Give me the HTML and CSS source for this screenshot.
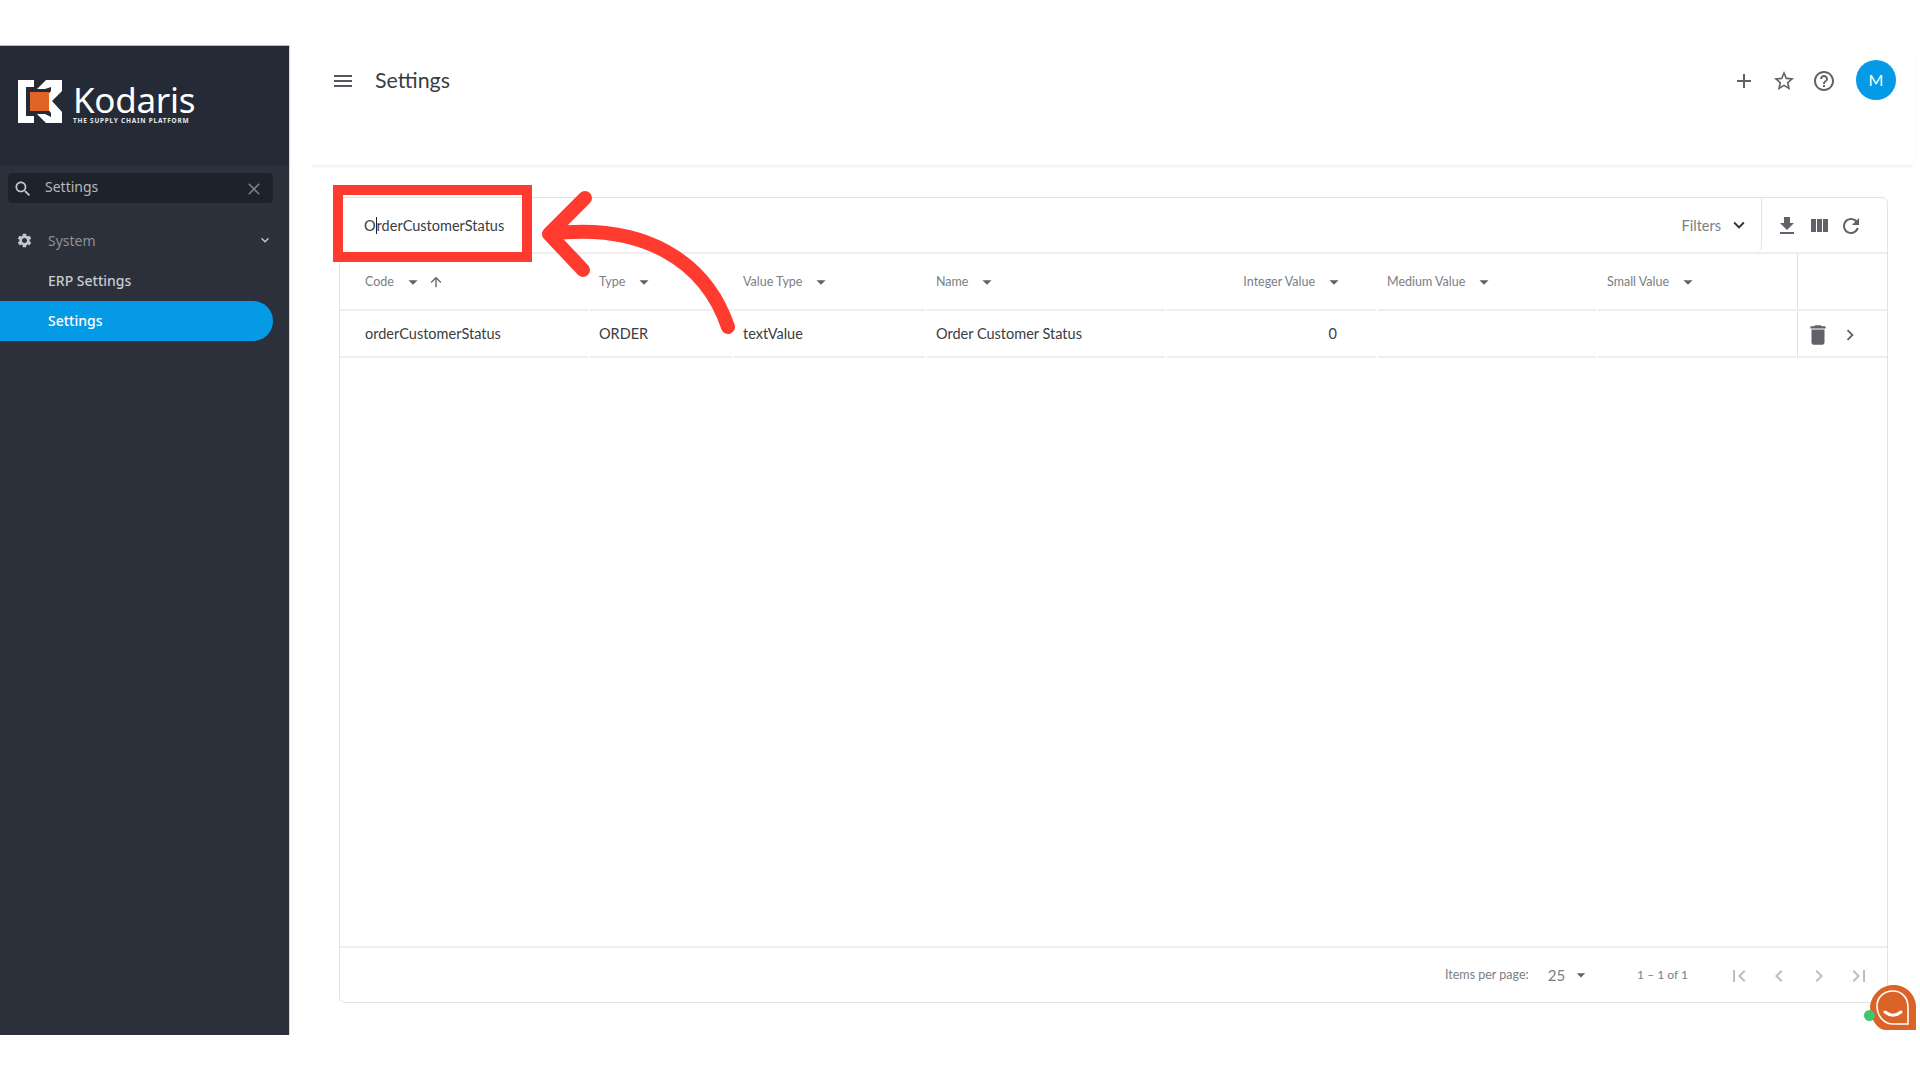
FILE: index.html
```html
<!DOCTYPE html>
<html>
<head>
    <title>Settings</title>
    <meta name="viewport" content="width=device-width, initial-scale=1">
    <link rel="stylesheet" href="styles.css">
</head>
<body>
    <svg class="icon-defs" width="0" height="0">
        <symbol id="i-menu" viewBox="0 0 24 24"><path d="M3 18h18v-2H3v2zm0-5h18v-2H3v2zm0-7v2h18V6H3z"/></symbol>
        <symbol id="i-add" viewBox="0 0 24 24"><path d="M19 13h-6v6h-2v-6H5v-2h6V5h2v6h6v2z"/></symbol>
        <symbol id="i-star" viewBox="0 0 24 24"><path d="M22 9.24l-7.19-.62L12 2 9.19 8.63 2 9.24l5.46 4.73L5.82 21 12 17.27 18.18 21l-1.63-7.03L22 9.24zM12 15.4l-3.76 2.27 1-4.28-3.32-2.88 4.38-.38L12 6.1l1.71 4.04 4.38.38-3.32 2.88 1 4.28L12 15.4z"/></symbol>
        <symbol id="i-help" viewBox="0 0 24 24"><path d="M11 18h2v-2h-2v2zm1-16C6.48 2 2 6.48 2 12s4.48 10 10 10 10-4.48 10-10S17.52 2 12 2zm0 18c-4.41 0-8-3.59-8-8s3.59-8 8-8 8 3.59 8 8-3.59 8-8 8zm0-14c-2.21 0-4 1.79-4 4h2c0-1.1.9-2 2-2s2 .9 2 2c0 2-3 1.75-3 5h2c0-2.25 3-2.5 3-5 0-2.21-1.79-4-4-4z"/></symbol>
        <symbol id="i-search" viewBox="0 0 24 24"><path d="M15.5 14h-.79l-.28-.27C15.41 12.59 16 11.11 16 9.5 16 5.91 13.09 3 9.5 3S3 5.91 3 9.5 5.91 16 9.5 16c1.61 0 3.09-.59 4.23-1.57l.27.28v.79l5 4.99L20.49 19l-4.99-5zm-6 0C7.01 14 5 11.99 5 9.5S7.01 5 9.5 5 14 7.01 14 9.5 11.99 14 9.5 14z"/></symbol>
        <symbol id="i-close" viewBox="0 0 24 24"><path d="M19 6.41L17.59 5 12 10.59 6.41 5 5 6.41 10.59 12 5 17.59 6.41 19 12 13.41 17.59 19 19 17.59 13.41 12z"/></symbol>
        <symbol id="i-gear" viewBox="0 0 24 24"><path d="M19.14 12.94c.04-.3.06-.61.06-.94 0-.32-.02-.64-.07-.94l2.03-1.58c.18-.14.23-.41.12-.61l-1.92-3.32c-.12-.22-.37-.29-.59-.22l-2.39.96c-.5-.38-1.03-.7-1.62-.94l-.36-2.54c-.04-.24-.24-.41-.48-.41h-3.84c-.24 0-.43.17-.47.41l-.36 2.54c-.59.24-1.13.57-1.62.94l-2.39-.96c-.22-.08-.47 0-.59.22L2.74 8.87c-.12.21-.08.47.12.61l2.03 1.58c-.05.3-.09.63-.09.94s.02.64.07.94l-2.03 1.58c-.18.14-.23.41-.12.61l1.92 3.32c.12.22.37.29.59.22l2.39-.96c.5.38 1.03.7 1.62.94l.36 2.54c.05.24.24.41.48.41h3.84c.24 0 .44-.17.47-.41l.36-2.54c.59-.24 1.13-.56 1.62-.94l2.39.96c.22.08.47 0 .59-.22l1.92-3.32c.12-.22.07-.47-.12-.61l-2.01-1.58zM12 15.6c-1.98 0-3.6-1.62-3.6-3.6s1.62-3.6 3.6-3.6 3.6 1.62 3.6 3.6-1.62 3.6-3.6 3.6z"/></symbol>
        <symbol id="i-more" viewBox="0 0 24 24"><path d="M16.59 8.59L12 13.17 7.41 8.59 6 10l6 6 6-6z"/></symbol>
        <symbol id="i-right" viewBox="0 0 24 24"><path d="M10 6L8.59 7.41 13.17 12l-4.58 4.59L10 18l6-6z"/></symbol>
        <symbol id="i-left" viewBox="0 0 24 24"><path d="M15.41 7.41L14 6l-6 6 6 6 1.41-1.41L10.83 12z"/></symbol>
        <symbol id="i-first" viewBox="0 0 24 24"><path d="M18.41 16.59L13.82 12l4.59-4.59L17 6l-6 6 6 6zM6 6h2v12H6z"/></symbol>
        <symbol id="i-last" viewBox="0 0 24 24"><path d="M5.59 7.41L10.18 12l-4.59 4.59L7 18l6-6-6-6zM16 6h2v12h-2z"/></symbol>
        <symbol id="i-download" viewBox="0 0 24 24"><path d="M19 9h-4V3H9v6H5l7 7 7-7zM5 18v2h14v-2H5z"/></symbol>
        <symbol id="i-columns" viewBox="0 0 24 24"><path d="M10 18h5V5h-5v13zm-6 0h5V5H4v13zM16 5v13h5V5h-5z"/></symbol>
        <symbol id="i-refresh" viewBox="0 0 24 24"><path d="M17.65 6.35C16.2 4.9 14.21 4 12 4c-4.42 0-7.99 3.58-7.99 8s3.57 8 7.99 8c3.73 0 6.84-2.55 7.73-6h-2.08c-.82 2.33-3.04 4-5.65 4-3.31 0-6-2.69-6-6s2.69-6 6-6c1.66 0 3.14.69 4.22 1.78L13 11h7V4l-2.35 2.35z"/></symbol>
        <symbol id="i-delete" viewBox="0 0 24 24"><path d="M6 19c0 1.1.9 2 2 2h8c1.1 0 2-.9 2-2V7H6v12zM19 4h-3.5l-1-1h-5l-1 1H5v2h14V4z"/></symbol>
        <symbol id="i-up" viewBox="0 0 24 24"><path d="M4 12l1.41 1.41L11 7.83V20h2V7.83l5.58 5.59L20 12l-8-8-8 8z"/></symbol>
        <symbol id="i-drop" viewBox="0 0 24 24"><path d="M7 10l5 5 5-5z"/></symbol>
    </svg>

    <div class="app">
        <aside class="sidebar">
            <div class="brand">
                <svg class="brand-mark" viewBox="0 0 44 43">
                    <path fill="#fff" d="M0 0h16v7H8v29h8v7H0z"/>
                    <path fill="#fff" d="M28 0h16v11l-10 10 10 11v11H28l-9-9h8l6 3v-4l-9-11 9-11V7l-6 2-8 0z"/>
                    <rect x="12" y="12" width="19" height="19" fill="#df6426"/>
                </svg>
                <div class="brand-text">
                    <div class="brand-name">Kodaris</div>
                    <div class="brand-tag">THE SUPPLY CHAIN PLATFORM</div>
                </div>
            </div>
            <div class="side-search">
                <svg class="side-search-icon"><use href="#i-search"/></svg>
                <span class="side-search-text">Settings</span>
                <svg class="side-search-close"><use href="#i-close"/></svg>
            </div>
            <div class="nav-group">
                <svg class="nav-gear"><use href="#i-gear"/></svg>
                <span class="nav-group-label">System</span>
                <svg class="nav-chevron"><use href="#i-more"/></svg>
            </div>
            <div class="nav-item">ERP Settings</div>
            <div class="nav-item active">Settings</div>
        </aside>

        <main class="main">
            <header class="topbar">
                <svg class="topbar-menu"><use href="#i-menu"/></svg>
                <h1 class="topbar-title">Settings</h1>
                <div class="topbar-actions">
                    <svg class="topbar-icon"><use href="#i-add"/></svg>
                    <svg class="topbar-icon"><use href="#i-star"/></svg>
                    <svg class="topbar-icon"><use href="#i-help"/></svg>
                    <div class="avatar">M</div>
                </div>
            </header>

            <section class="card">
                <div class="toolbar">
                    <div class="search-area">
                        <div class="search-value">O<span class="caret"></span>rderCustomerStatus</div>
                        <div class="filters">Filters <svg class="filters-icon"><use href="#i-more"/></svg></div>
                    </div>
                    <div class="tools">
                        <svg class="tool"><use href="#i-download"/></svg>
                        <svg class="tool"><use href="#i-columns"/></svg>
                        <svg class="tool"><use href="#i-refresh"/></svg>
                    </div>
                </div>

                <div class="row head">
                    <div class="cell first">Code <svg class="drop"><use href="#i-drop"/></svg><svg class="sort-up"><use href="#i-up"/></svg></div>
                    <div class="cell">Type <svg class="drop"><use href="#i-drop"/></svg></div>
                    <div class="cell">Value Type <svg class="drop"><use href="#i-drop"/></svg></div>
                    <div class="cell">Name <svg class="drop"><use href="#i-drop"/></svg></div>
                    <div class="cell num">Integer Value <svg class="drop"><use href="#i-drop"/></svg></div>
                    <div class="cell">Medium Value <svg class="drop"><use href="#i-drop"/></svg></div>
                    <div class="cell">Small Value <svg class="drop"><use href="#i-drop"/></svg></div>
                    <div class="cell actions"></div>
                </div>
                <div class="row body">
                    <div class="cell first">orderCustomerStatus</div>
                    <div class="cell">ORDER</div>
                    <div class="cell">textValue</div>
                    <div class="cell">Order Customer Status</div>
                    <div class="cell num">0</div>
                    <div class="cell"></div>
                    <div class="cell"></div>
                    <div class="cell actions">
                        <svg class="row-delete"><use href="#i-delete"/></svg>
                        <svg class="row-open"><use href="#i-right"/></svg>
                    </div>
                </div>
                <div class="table-space"></div>

                <footer class="pager">
                    <span class="pager-label">Items per page:</span>
                    <span class="pager-size">25</span>
                    <svg class="pager-drop"><use href="#i-drop"/></svg>
                    <span class="pager-range">1 – 1 of 1</span>
                    <svg class="pager-btn"><use href="#i-first"/></svg>
                    <svg class="pager-btn"><use href="#i-left"/></svg>
                    <svg class="pager-btn"><use href="#i-right"/></svg>
                    <svg class="pager-btn"><use href="#i-last"/></svg>
                </footer>
            </section>
        </main>
    </div>

    <!-- annotation drawn over the page -->
    <div class="callout-box"></div>
    <svg class="callout-arrow" viewBox="0 0 1920 1080">
        <path d="M728 327C706 262 645 222 549 234M585 198L549 234L583 270"/>
    </svg>

    <!-- chat widget -->
    <svg class="chat" viewBox="0 0 46 46">
        <path fill="#dc6327" d="M0 21C2 8 12 0 24 0C36 0 46 10 46 22V45H16C6 45 0 32 0 21z"/>
        <path fill="none" stroke="#fff" stroke-width="1.6" d="M7 21C7 12 14 6 23 6C32 6 38 13 38 22V39H23C14 39 7 31 7 21z"/>
        <path fill="none" stroke="#fff" stroke-width="3" stroke-linecap="round" d="M15 27C20 31 26 31 31 27"/>
    </svg>
    <div class="chat-dot"></div>
</body>
</html>
```

FILE: styles.css
```css
* {
    box-sizing: border-box;
}
html, body {
    margin: 0;
    padding: 0;
    height: 1080px;
    overflow: hidden;
    background-color: #fff;
}
body {
    font-family: Lato, "Liberation Sans", sans-serif;
    color: #3a3d42;
    position: relative;
}
.icon-defs {
    position: absolute;
}
svg {
    fill: currentColor;
    flex: none;
}
.app {
    display: flex;
    height: 990px;
    margin-top: 45px;
    margin-right: 5px;
}

/* sidebar */
.sidebar {
    width: 290px;
    flex: none;
    background-color: #2b303b;
    border-right: 1px solid #d8d8d8;
    border-top: 1px solid #bbb;
    font-family: "Noto Sans", sans-serif;
}
.brand {
    height: 119px;
    background-color: #252b36;
    display: flex;
    align-items: flex-start;
    padding: 34px 0 0 18px;
}
.brand-mark {
    width: 44px;
    height: 43px;
}
.brand-text {
    margin-left: 11px;
    color: #fff;
}
.brand-name {
    font-size: 35px;
    line-height: 32px;
    margin-top: 4px;
    letter-spacing: -0.3px;
}
.brand-tag {
    font-size: 6.5px;
    line-height: 7px;
    margin-top: 1px;
    font-weight: 700;
    letter-spacing: 0.75px;
    color: #e8e8e8;
}
.side-search {
    margin: 8px 16px 0 8px;
    height: 30px;
    background-color: #1e222a;
    border-radius: 4px;
    display: flex;
    align-items: center;
    color: #b5b8bd;
    font-size: 14px;
}
.side-search-icon {
    width: 20px;
    height: 20px;
    margin-left: 5px;
    margin-top: 2px;
    color: #c4c7cb;
}
.side-search-text {
    margin-left: 12px;
    margin-top: -3px;
    flex: 1;
}
.side-search-close {
    width: 20px;
    height: 20px;
    margin-right: 9px;
    margin-top: 2px;
    color: #777b82;
}
.nav-group {
    margin-top: 22px;
    height: 30px;
    display: flex;
    align-items: center;
    color: #8d9096;
    font-size: 14px;
}
.nav-gear {
    width: 17px;
    height: 17px;
    margin-left: 16px;
    color: #c4c7cb;
}
.nav-group-label {
    margin-left: 15px;
    flex: 1;
}
.nav-chevron {
    width: 16px;
    height: 16px;
    margin-right: 16px;
    color: #c4c7cb;
}
.nav-item {
    height: 40px;
    margin-right: 16px;
    padding-left: 48px;
    line-height: 40px;
    font-size: 14px;
    font-weight: 500;
    color: #c9cbce;
    border-radius: 0 20px 20px 0;
}
.nav-group + .nav-item {
    margin-top: 6px;
}
.nav-item.active {
    background-color: #059ae6;
    color: #fff;
}

/* top bar */
.main {
    flex: 1;
    display: flex;
    flex-direction: column;
    min-width: 0;
}
.topbar {
    height: 120px;
    margin-left: 20px;
    padding: 0 19px 0 21px;
    display: flex;
    align-items: flex-start;
    box-shadow: 0 3px 4px -2px rgba(0, 0, 0, 0.09);
}
.topbar-menu {
    width: 24px;
    height: 24px;
    margin-top: 24px;
    color: #55585e;
}
.topbar-title {
    margin: 21px 0 0 20px;
    font-size: 21.4px;
    line-height: 28px;
    font-weight: 400;
    color: #3a3d42;
    flex: 1;
}
.topbar-actions {
    display: flex;
    align-items: center;
    gap: 16px;
    height: 40px;
    margin-top: 15px;
}
.topbar-icon {
    width: 24px;
    height: 24px;
    margin-top: 2px;
    color: #5f6268;
}
.avatar {
    width: 40px;
    height: 40px;
    margin-left: 4px;
    border-radius: 50%;
    background-color: #059ae6;
    color: #fff;
    font-size: 16px;
    line-height: 40px;
    text-align: center;
}

/* table card */
.card {
    margin: 32px 27px 32px 49px;
    flex: 1;
    display: flex;
    flex-direction: column;
    border: 1px solid #e2e2e2;
    border-radius: 6px;
}
.toolbar {
    height: 56px;
    flex: none;
    display: flex;
    border-bottom: 2px solid #eee;
}
.search-area {
    flex: 1;
    display: flex;
    align-items: center;
    justify-content: space-between;
    padding: 0 11px 0 24px;
    border-right: 1px solid #e2e2e2;
    border-radius: 0 0 6px 0;
}
.search-value {
    font-size: 14.5px;
    color: #3a3d42;
}
.caret {
    display: inline-block;
    width: 1px;
    height: 17px;
    background-color: #222;
    vertical-align: -3px;
}
.filters {
    display: flex;
    align-items: center;
    gap: 7px;
    font-size: 14.5px;
    color: #7b7e84;
}
.filters-icon {
    width: 22px;
    height: 22px;
    color: #333;
}
.tools {
    width: 125px;
    flex: none;
    display: flex;
    align-items: center;
    gap: 8px;
    padding-left: 13px;
    padding-top: 2px;
}
.tool {
    width: 24px;
    height: 24px;
    color: #5f6268;
}
.row {
    display: grid;
    grid-template-columns: 248px 142px 191px 238px 209px 218px 198px 1fr;
    column-gap: 2px;
    flex: none;
}
.cell {
    display: flex;
    align-items: center;
    padding-left: 9px;
    border-bottom: 2px solid #eee;
}
.cell.first {
    padding-left: 25px;
}
.cell.num {
    justify-content: flex-end;
}
.head .cell.num {
    padding-right: 31px;
}
.body .cell.num {
    padding-right: 39px;
}
.cell.actions {
    margin-left: -1px;
    border-left: 1px solid #e2e2e2;
}
.head .cell {
    height: 57px;
    font-size: 12.5px;
    color: #7b7e84;
}
.body .cell {
    height: 47px;
    font-size: 14.5px;
    color: #3a3d42;
}
.drop {
    width: 22px;
    height: 22px;
    margin-left: 8px;
    color: #5f6268;
}
.sort-up {
    width: 16px;
    height: 16px;
    margin-left: 4px;
    color: #5f6268;
}
.row-delete {
    width: 26px;
    height: 26px;
    margin-left: -2px;
    margin-top: 2px;
    color: #5f6268;
}
.row-open {
    width: 22px;
    height: 22px;
    margin-left: 8px;
    margin-top: 2px;
    color: #5f6268;
}
.table-space {
    flex: 1;
}
.pager {
    height: 56px;
    flex: none;
    display: flex;
    align-items: center;
    border-top: 2px solid #eee;
    padding-left: 1105px;
    font-size: 12.5px;
    color: #7b7e84;
}
.pager-label {
    margin-top: -2px;
}
.pager-size {
    margin-left: 19px;
    font-size: 15px;
}
.pager-drop {
    width: 20px;
    height: 20px;
    margin-left: 6px;
    color: #5f6268;
}
.pager-range {
    margin-left: 46px;
    margin-right: 39px;
    margin-top: -2px;
    font-size: 12px;
}
.pager-btn {
    width: 24px;
    height: 24px;
    margin-right: 16px;
    margin-top: 2px;
    color: #bdbdbd;
}

/* annotation */
.callout-box {
    position: absolute;
    left: 333px;
    top: 185px;
    width: 199px;
    height: 77px;
    border: 10px solid #ff3b2f;
}
.callout-arrow {
    position: absolute;
    left: 0;
    top: 0;
    width: 1920px;
    height: 1080px;
    fill: none;
    stroke: #ff3b2f;
    stroke-width: 14;
    stroke-linecap: round;
    stroke-linejoin: round;
}

/* chat widget */
.chat {
    position: absolute;
    left: 1870px;
    top: 985px;
    width: 46px;
    height: 46px;
}
.chat-dot {
    position: absolute;
    left: 1864px;
    top: 1010px;
    width: 11px;
    height: 11px;
    border-radius: 50%;
    background-color: #3fc66c;
}
```
